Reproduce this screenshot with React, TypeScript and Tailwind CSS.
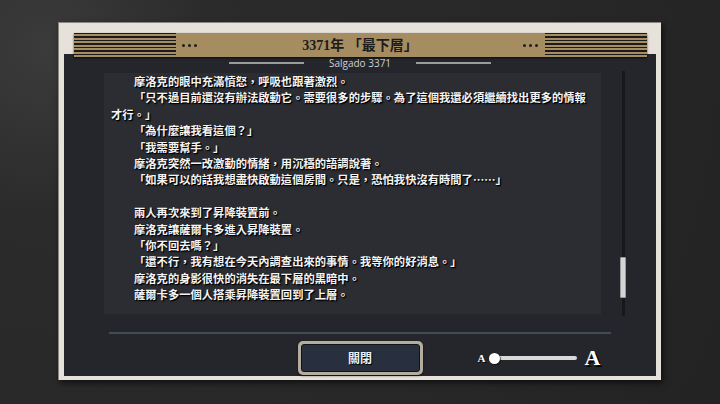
import React from "react";

const body = "font-['Noto_Sans_CJK_TC',sans-serif]";
const serif = "font-['Liberation_Serif','Noto_Sans_CJK_TC',serif]";

// each entry is one visual line of the log
const lines: { text: string; indent?: boolean }[] = [
  { text: "摩洛克的眼中充滿憤怒，呼吸也跟著激烈。", indent: true },
  { text: "「只不過目前還沒有辦法啟動它。需要很多的步驟。為了這個我還必須繼續找出更多的情報", indent: true },
  { text: "才行。」" },
  { text: "「為什麼讓我看這個？」", indent: true },
  { text: "「我需要幫手。」", indent: true },
  { text: "摩洛克突然一改激動的情緒，用沉穩的語調說著。", indent: true },
  { text: "「如果可以的話我想盡快啟動這個房間。只是，恐怕我快沒有時間了……」", indent: true },
  { text: "" },
  { text: "兩人再次來到了昇降裝置前。", indent: true },
  { text: "摩洛克讓薩爾卡多進入昇降裝置。", indent: true },
  { text: "「你不回去嗎？」", indent: true },
  { text: "「還不行，我有想在今天內調查出來的事情。我等你的好消息。」", indent: true },
  { text: "摩洛克的身影很快的消失在最下層的黑暗中。", indent: true },
  { text: "薩爾卡多一個人搭乘昇降裝置回到了上層。", indent: true },
];

function Stripes() {
  return (
    <div className="w-[102px] h-full bg-[repeating-linear-gradient(to_bottom,#1b1b1b_0px,#1b1b1b_1.5px,#a68c61_1.5px,#a68c61_3.5px)]" />
  );
}

function Dots() {
  return (
    <div className="flex gap-[3px]">
      <span className="w-[3px] h-[3px] rounded-full bg-[#1e1e1e]" />
      <span className="w-[3px] h-[3px] rounded-full bg-[#1e1e1e]" />
      <span className="w-[3px] h-[3px] rounded-full bg-[#1e1e1e]" />
    </div>
  );
}

export default function App() {
  return (
    <div className="w-[720px] h-[404px] overflow-hidden bg-[radial-gradient(circle_at_6%_12%,#3b3b3b_0%,#2b2b2b_22%,#272727_70%,#232323_100%)] pt-[22px] pl-[58px]">
      {/* frame */}
      <div className="w-[603px] h-[358px] bg-[#e6e2db] px-[5px] pt-[10px] pb-[4px] border-l border-t border-[#8a8782] shadow-[2px_3px_6px_rgba(0,0,0,0.6)] flex flex-col">
        {/* gold title bar */}
        <div className="relative z-10 ml-[10px] mr-[9px] h-[24px] bg-[#a68c61] flex items-center shadow-[0_1px_2px_rgba(0,0,0,0.7)]">
          <Stripes />
          <div className="ml-[6px]"><Dots /></div>
          <div className={`flex-1 text-center text-[14px] font-bold text-[#1c1c1c] ${serif}`}>3371年 「最下層」</div>
          <div className="mr-[7px]"><Dots /></div>
          <Stripes />
        </div>

        {/* dark panel */}
        <div className="-mt-[3px] flex-1 bg-[#25262b] pt-[3px] flex flex-col">
          {/* label */}
          <div className="h-[12px] flex items-center justify-center gap-[25px]">
            <div className="w-[75px] h-[1.5px] bg-[#9c9c9c]" />
            <span className="text-[10px] text-[#cfcfcf] font-['Open_Sans',sans-serif] leading-none">Salgado 3371</span>
            <div className="w-[75px] h-[1.5px] bg-[#9c9c9c]" />
          </div>

          {/* text + scrollbar */}
          <div className="mt-[4px] flex">
            <div className={`ml-[40px] w-[497px] h-[241px] overflow-hidden bg-[#2c2d32] pl-[7px] ${body}`}>
              {lines.map((l, i) => (
                <p
                  key={i}
                  className={`whitespace-nowrap text-[11.3px] leading-[16.4px] min-h-[16.4px] font-bold text-[#f4f4f4] [text-shadow:1px_1px_0_#000,1px_1px_2px_#000] ${l.indent ? "pl-[23px]" : ""}`}
                >
                  {l.text}
                </p>
              ))}
            </div>
            <div className="ml-[19px] -mt-[2px] h-[245px] w-[6px] flex justify-center relative">
              <div className="w-[3px] h-full bg-[#17181b]" />
              <div className="absolute left-0 top-[186px] w-[6px] h-[41px] bg-[#d4d4d4] rounded-[1px] border border-[#9a9a9a]" />
            </div>
          </div>

          {/* separator */}
          <div className="mt-[16px] ml-[45px] w-[502px] h-[2px] bg-[#434b53]" />

          {/* bottom row */}
          <div className="mt-[7px] h-[34px] grid grid-cols-[1fr_125px_1fr]">
            <div />
            <button className="h-[34px] rounded-[5px] bg-[#b4ac9c] p-[3px] shadow-[0_1px_2px_rgba(0,0,0,0.6)]">
              <div className={`w-full h-full rounded-[3px] bg-[#283040] border border-[#0f131a] flex items-center justify-center text-[12px] text-[#f2f2f2] font-bold [text-shadow:1px_1px_1px_#000] ${body}`}>
                關閉
              </div>
            </button>
            <div className="flex items-center pl-[55px]">
              <span className={`text-[11px] font-bold text-white leading-none [text-shadow:1px_1px_0_#000] ${serif}`}>A</span>
              <div className="ml-[4px] relative w-[88px] h-[11px] flex items-center">
                <div className="ml-[5px] w-[83px] h-[4px] rounded-full bg-[#d9d9d9]" />
                <div className="absolute left-0 top-0 w-[11px] h-[11px] rounded-full bg-white shadow-[1px_1px_1px_rgba(0,0,0,0.6)]" />
              </div>
              <span className={`ml-[7px] text-[22px] font-bold text-white leading-none [text-shadow:2px_2px_0_#000] ${serif}`}>A</span>
            </div>
          </div>
        </div>
      </div>
    </div>
  );
}
